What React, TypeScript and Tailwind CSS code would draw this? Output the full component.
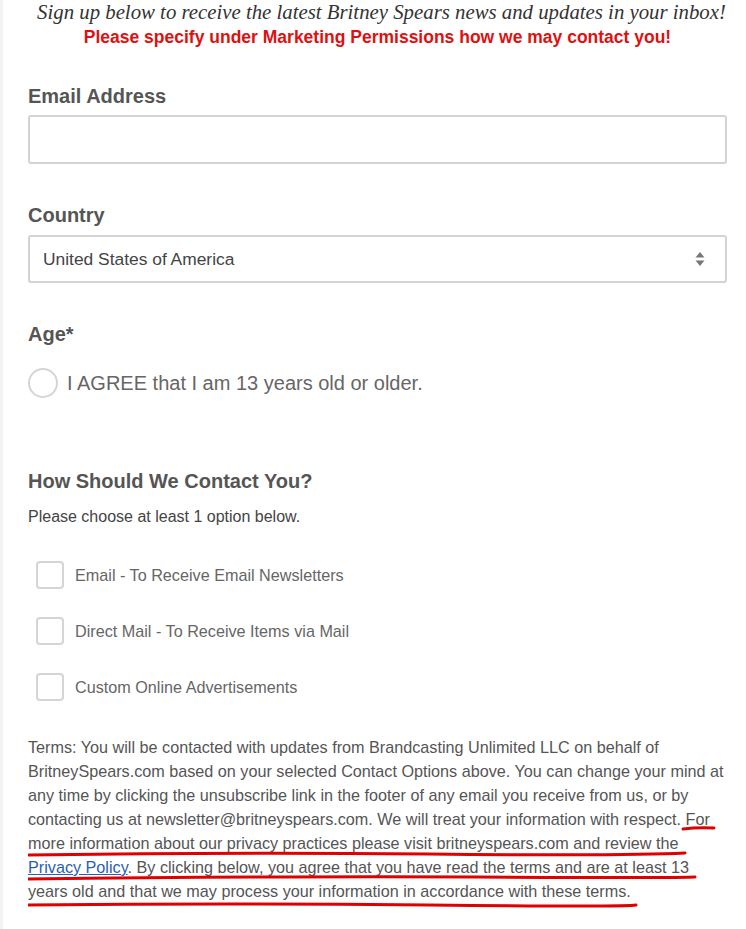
import React from 'react';

const sans = { fontFamily: '"Liberation Sans", Arial, sans-serif' };

const Checkbox: React.FC<{ label: string }> = ({ label }) => (
  <label className="flex items-center h-[28px] gap-[11px] pl-[8px]">
    <span className="w-[28px] h-[28px] rounded-[4px] border-2 border-[#d5d5d5] bg-white shrink-0" />
    <span className="text-[16.2px] text-[#666]">{label}</span>
  </label>
);

export default function App() {
  return (
    <div className="min-h-screen bg-white border-l-[3px] border-[#f3f3f3]" style={sans}>
      <div className="pl-[25px] pr-[19px]">
        <p
          className="text-center italic text-[20.8px] leading-[24px] text-[#333] -mx-[12px] pl-[8px]"
          style={{ fontFamily: '"Liberation Serif", Georgia, serif' }}
        >
          Sign up below to receive the latest Britney Spears news and updates in your inbox!
        </p>
        <p className="text-center font-bold text-[17.5px] leading-[24px] text-[#e01010] mt-[1px]">
          Please specify under Marketing Permissions how we may contact you!
        </p>

        <div className="mt-[35px]">
          <h2 className="text-[20px] font-bold text-[#555] leading-[24px]">Email Address</h2>
          <div className="mt-[7px] h-[49px] rounded-[3px] border-2 border-[#d3d3d3] bg-white" />
        </div>

        <div className="mt-[39px]">
          <h2 className="text-[20px] font-bold text-[#555] leading-[24px]">Country</h2>
          <div className="mt-[8px] h-[48px] rounded-[3px] border-2 border-[#d3d3d3] bg-white flex items-center justify-between pl-[13px] pr-[20px]">
            <span className="text-[17.4px] text-[#444]">United States of America</span>
            <svg width="10" height="14" viewBox="0 0 10 14">
              <path d="M5 0 L9.5 5.5 L0.5 5.5 Z" fill="#777" />
              <path d="M5 14 L9.5 8.5 L0.5 8.5 Z" fill="#777" />
            </svg>
          </div>
        </div>

        <div className="mt-[39px]">
          <h2 className="text-[20px] font-bold text-[#555] leading-[24px]">Age*</h2>
          <label className="mt-[22px] flex items-center gap-[9px]">
            <span className="w-[30px] h-[30px] rounded-full border-2 border-[#d5d5d5] bg-white shrink-0" />
            <span className="text-[20px] text-[#666]">I AGREE that I am 13 years old or older.</span>
          </label>
        </div>

        <div className="mt-[71px]">
          <h2 className="text-[20px] font-bold text-[#555] leading-[24px]">How Should We Contact You?</h2>
          <p className="mt-[13px] text-[16px] text-[#444] leading-[22px]">Please choose at least 1 option below.</p>
          <div className="mt-[33px] flex flex-col gap-[28px]">
            <Checkbox label="Email - To Receive Email Newsletters" />
            <Checkbox label="Direct Mail - To Receive Items via Mail" />
            <Checkbox label="Custom Online Advertisements" />
          </div>
        </div>

        <div className="relative mt-[34px]">
          <p className="text-[16.2px] leading-[24px] text-[#555] whitespace-nowrap">
            Terms: You will be contacted with updates from Brandcasting Unlimited LLC on behalf of<br />
            BritneySpears.com based on your selected Contact Options above. You can change your mind at<br />
            any time by clicking the unsubscribe link in the footer of any email you receive from us, or by<br />
            contacting us at newsletter@britneyspears.com. We will treat your information with respect. For<br />
            more information about our privacy practices please visit britneyspears.com and review the<br />
            <a className="text-[#2a5fb0] underline">Privacy Policy</a>. By clicking below, you agree that you have read the terms and are at least 13<br />
            years old and that we may process your information in accordance with these terms.
          </p>
          <svg className="absolute left-0 top-0 pointer-events-none" width="720" height="180" viewBox="0 0 720 180">
            <g stroke="#e00000" strokeWidth="3" strokeLinecap="round" fill="none">
              <path d="M655 94 Q670 92 686 93" />
              <path d="M0 120 Q200 117 400 119 T657 118" />
              <path d="M0 144 Q250 141 450 142 T667 142" />
              <path d="M0 170 Q200 168 400 170 T608 170" />
            </g>
          </svg>
        </div>
      </div>
    </div>
  );
}
